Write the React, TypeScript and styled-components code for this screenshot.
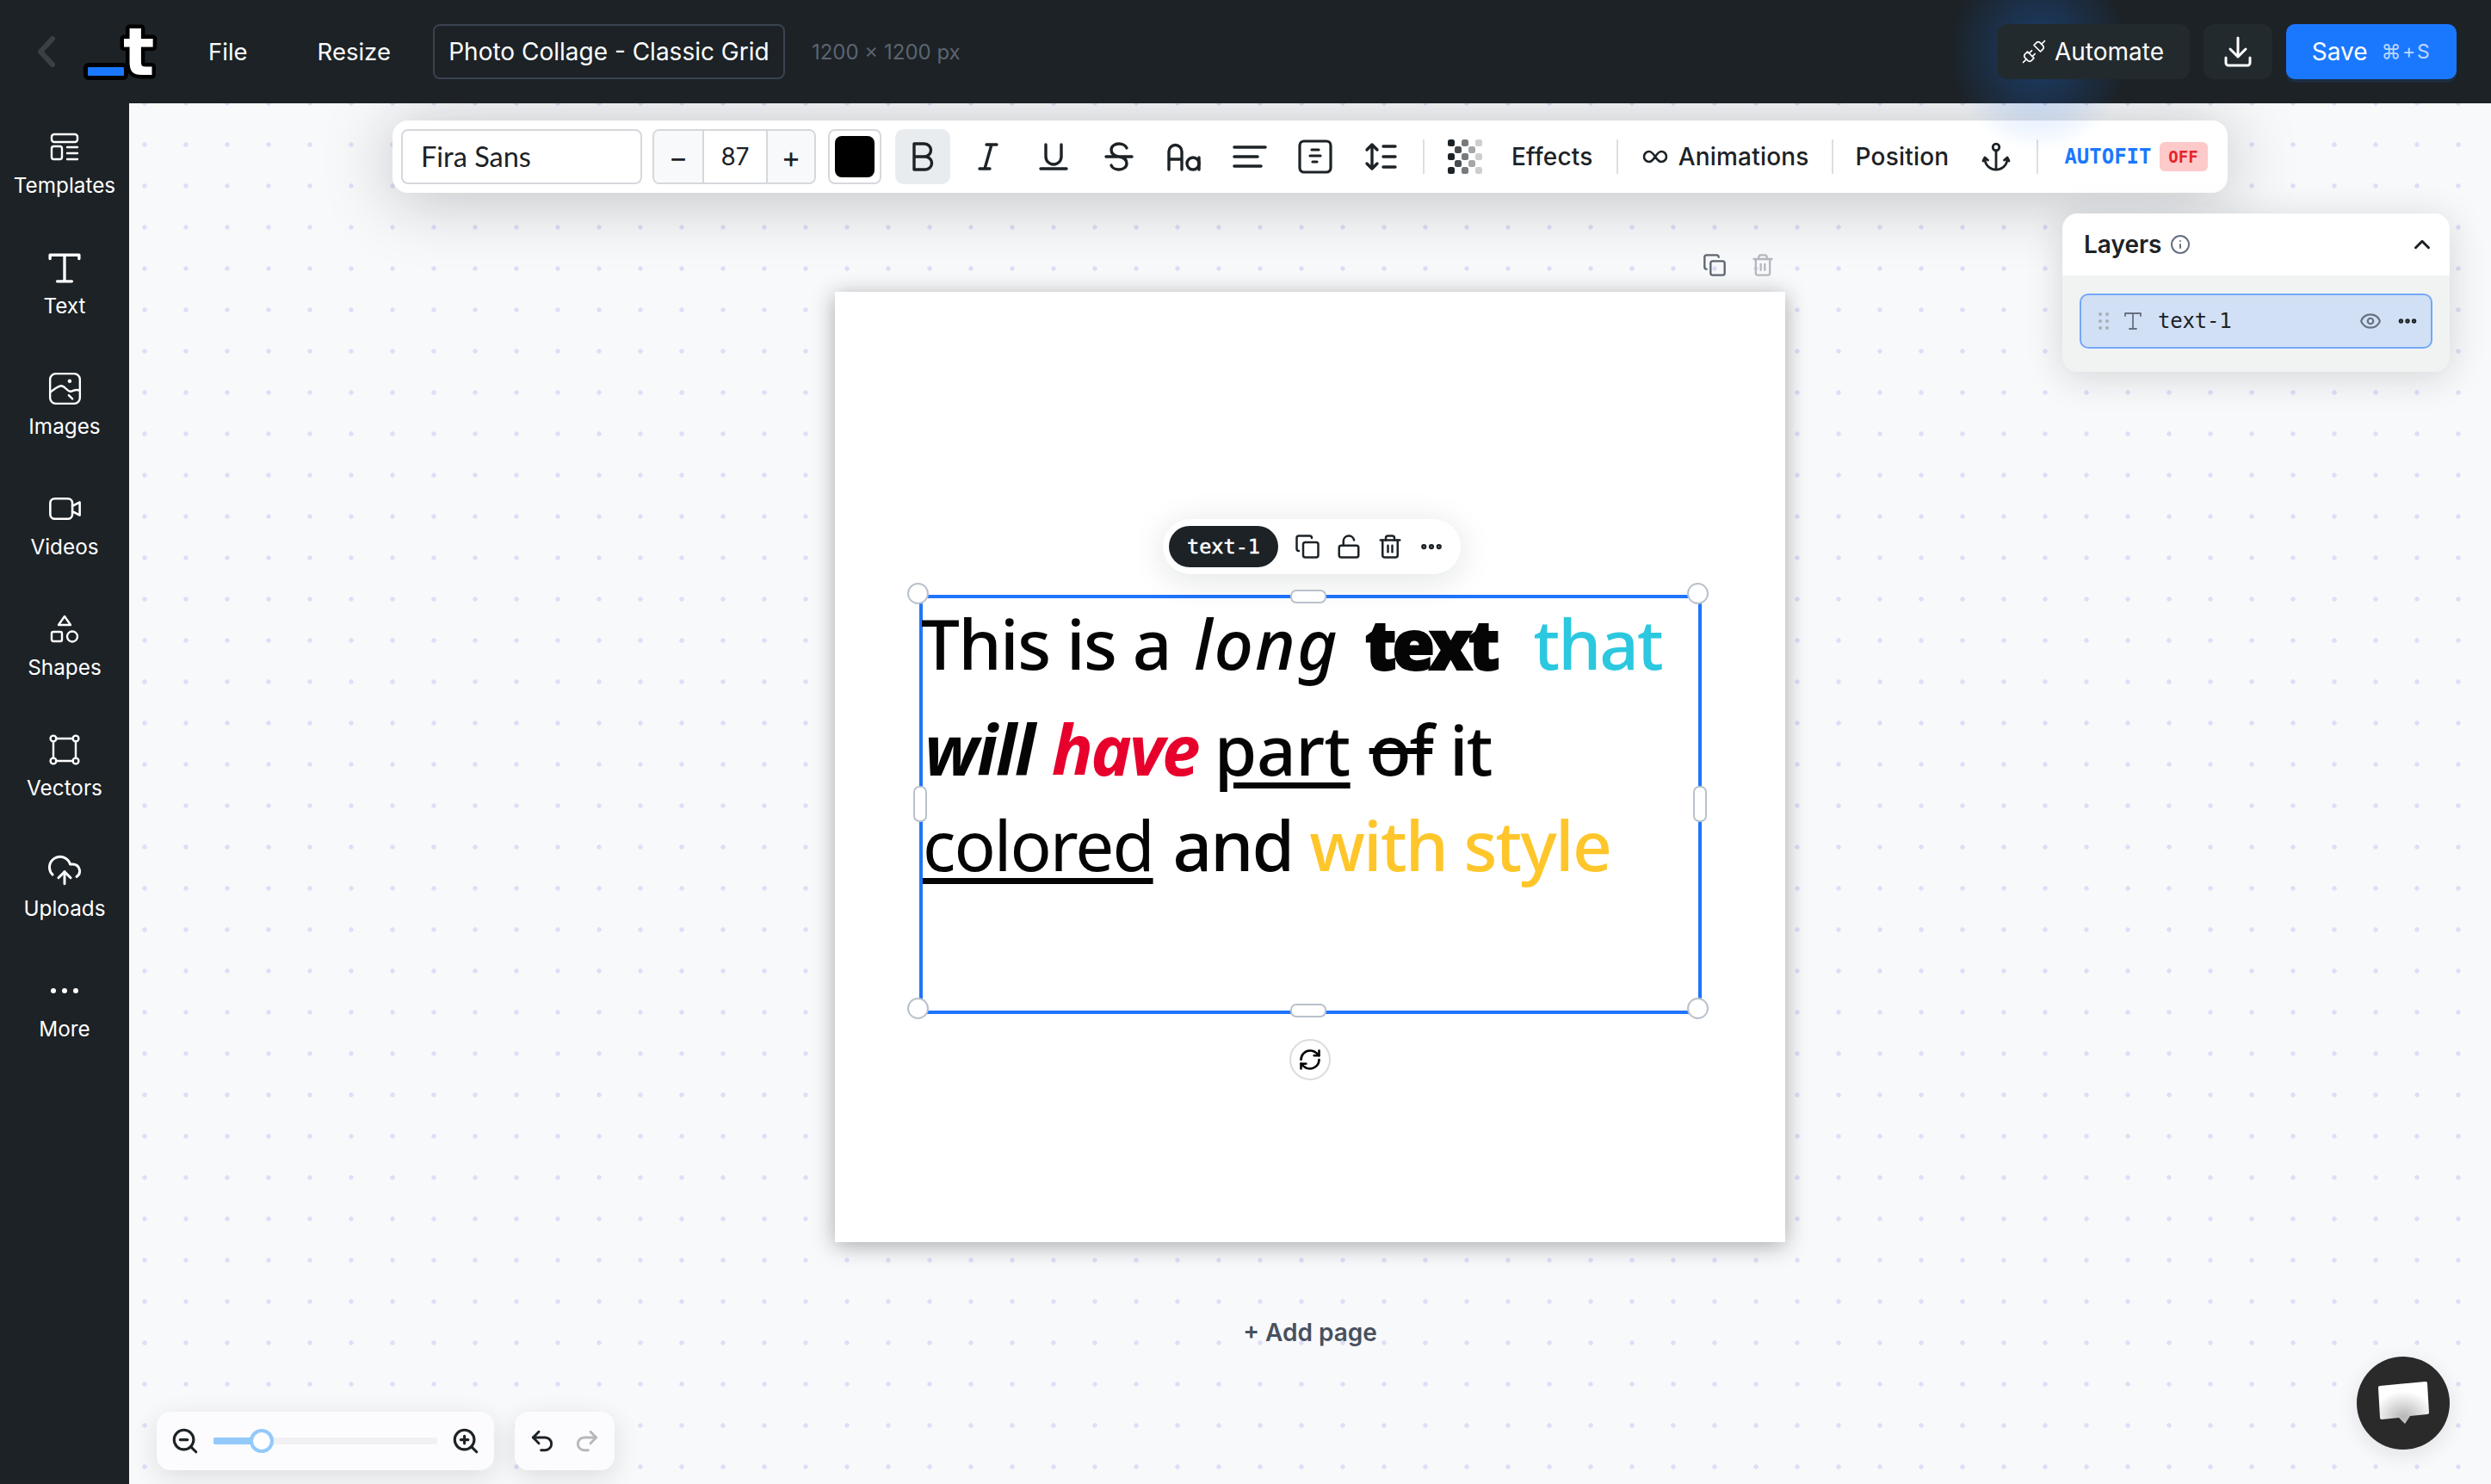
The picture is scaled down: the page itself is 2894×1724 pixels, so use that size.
import React from "react";
import styled, { createGlobalStyle } from "styled-components";
import {
  ChevronUp,
  Copy,
  Ellipsis,
  Eye,
  Info,
  LockOpen,
  Redo2,
  RefreshCw,
  Trash2,
  Undo2,
  Unplug,
  ZoomIn,
  ZoomOut,
  CloudUpload,
} from "lucide-react";

const GlobalStyle = createGlobalStyle`
  html, body {
    margin: 0;
    padding: 0;
    background: #f8f9fb;
  }
  * {
    box-sizing: border-box;
  }
`;

const DARK = "#1c2226";
const BLUE = "#1a78ff";
const UI_FONT = `Inter, "Liberation Sans", sans-serif`;
const MONO_FONT = `"DejaVu Sans Mono", "Liberation Mono", monospace`;
const DOC_FONT = `"Noto Sans", Lato, sans-serif`;

const Shell = styled.div`
  width: 2894px;
  height: 1724px;
  overflow: hidden;
  display: flex;
  flex-direction: column;
  font-family: ${UI_FONT};
  color: ${DARK};
`;

const Header = styled.header`
  position: relative;
  z-index: 3;
  height: 120px;
  flex: none;
  display: flex;
  align-items: center;
  padding: 0 40px 0 43px;
  background: ${DARK};
  color: #fff;
`;

const LogoBox = styled.div`
  margin-left: 31px;
  width: 90px;
  height: 72px;
  svg {
    overflow: visible;
  }
`;

const MenuItem = styled.span<{ $gap: number }>`
  margin-left: ${(p) => p.$gap}px;
  font-size: 27.5px;
  line-height: 34px;
`;

const TitleBox = styled.div`
  margin-left: 49px;
  width: 409px;
  height: 64px;
  display: flex;
  align-items: center;
  justify-content: center;
  border: 2px solid #3a4350;
  border-radius: 8px;
  font-size: 28px;
  white-space: nowrap;
`;

const Dimensions = styled.span`
  margin-left: 31px;
  font-size: 24px;
  color: #5c6470;
`;

const HeaderActions = styled.div`
  margin-left: auto;
  display: flex;
  align-items: center;
  gap: 16px;
`;

const AutomateButton = styled.div`
  position: relative;
  width: 224px;
  height: 64px;
  display: flex;
  align-items: center;
  justify-content: center;
  gap: 9px;
  padding-right: 2px;
  border-radius: 12px;
  background: #232a2e;
  font-size: 28px;

  &::before {
    content: "";
    position: absolute;
    z-index: -1;
    left: -56px;
    top: -84px;
    width: 210px;
    height: 232px;
    background: radial-gradient(closest-side, rgba(26, 120, 255, 0.32), rgba(26, 120, 255, 0));
    pointer-events: none;
  }
`;

const DownloadButton = styled.div`
  width: 80px;
  height: 64px;
  display: flex;
  align-items: center;
  justify-content: center;
  border-radius: 12px;
  background: #232a2e;
`;

const SaveButton = styled.div`
  width: 198px;
  height: 64px;
  display: flex;
  align-items: center;
  justify-content: center;
  gap: 16px;
  border-radius: 10px;
  background: ${BLUE};
  box-shadow: 0 4px 0 #1d2c40;
  font-size: 28px;
`;

const Shortcut = styled.span`
  font-size: 23px;
  letter-spacing: 1.6px;
  color: #bcd6ff;
`;

const Body = styled.div`
  flex: 1;
  min-height: 0;
  display: flex;
`;

const Sidebar = styled.nav`
  position: relative;
  z-index: 2;
  width: 150px;
  flex: none;
  padding-top: 18px;
  background: ${DARK};
  color: #fff;
`;

const SideItem = styled.div`
  height: 140px;
  padding-top: 13px;
  display: flex;
  flex-direction: column;
  align-items: center;
`;

const SideIcon = styled.div`
  height: 40px;
  display: flex;
  align-items: center;
  justify-content: center;
`;

const SideLabel = styled.span`
  margin-top: 9px;
  font-size: 24.3px;
  line-height: 30px;
`;

const Canvas = styled.main`
  position: relative;
  flex: 1;
  min-width: 0;
  display: flex;
  flex-direction: column;
  align-items: center;
  background-color: #f8f9fb;
  background-image: radial-gradient(circle, #dfddf7 2.4px, rgba(223, 221, 247, 0) 3px);
  background-size: 48px 48px;
  background-position: -6px -24px;
`;

const Toolbar = styled.div`
  position: relative;
  z-index: 2;
  margin-top: 20px;
  width: 2132px;
  height: 84px;
  flex: none;
  display: flex;
  align-items: center;
  padding-left: 10px;
  border-radius: 18px;
  background: #fff;
  box-shadow: 0 6px 80px rgba(20, 24, 28, 0.26);
`;

const FontSelect = styled.div`
  width: 280px;
  height: 64px;
  display: flex;
  align-items: center;
  padding: 0 0 2px 21px;
  border: 2px solid #d5d8dc;
  border-radius: 8px;
  font-family: Lato, sans-serif;
  font-size: 32.5px;
`;

const Stepper = styled.div`
  margin-left: 12px;
  width: 190px;
  height: 64px;
  display: flex;
  border: 2px solid #d5d8dc;
  border-radius: 8px;
  overflow: hidden;
`;

const StepCell = styled.div<{ $wide?: boolean }>`
  flex: ${(p) => (p.$wide ? "1" : "none")};
  width: ${(p) => (p.$wide ? "auto" : "56px")};
  display: flex;
  align-items: center;
  justify-content: center;
  font-size: ${(p) => (p.$wide ? "28px" : "34px")};
  background: ${(p) => (p.$wide ? "#fff" : "#f8f9fa")};
  & + & {
    border-left: 2px solid #d5d8dc;
  }
`;

const SwatchFrame = styled.div`
  margin-left: 14px;
  width: 62px;
  height: 64px;
  padding: 6px;
  border: 2px solid #d5d8dc;
  border-radius: 8px;
`;

const Swatch = styled.div`
  width: 100%;
  height: 100%;
  border-radius: 8px;
  background: #000;
`;

const IconGroup = styled.div`
  margin-left: 16px;
  display: flex;
  gap: 12px;
`;

const IconButton = styled.div<{ $active?: boolean }>`
  width: 64px;
  height: 64px;
  display: flex;
  align-items: center;
  justify-content: center;
  border-radius: 10px;
  background: ${(p) => (p.$active ? "#e9ecef" : "transparent")};
`;

const Divider = styled.div<{ $left: number; $right: number }>`
  width: 2px;
  height: 40px;
  flex: none;
  margin: 0 ${(p) => p.$right}px 0 ${(p) => p.$left}px;
  background: #dcdfe2;
`;

const ToolSlot = styled.div<{ $left?: number; $right?: number }>`
  display: flex;
  align-items: center;
  flex: none;
  margin: 0 ${(p) => p.$right ?? 0}px 0 ${(p) => p.$left ?? 0}px;
`;

const ToolText = styled.span<{ $left?: number }>`
  margin-left: ${(p) => p.$left ?? 0}px;
  font-size: 28px;
  font-weight: 500;
  letter-spacing: 0.2px;
  white-space: nowrap;
`;

const AutofitLabel = styled.span`
  font-family: ${MONO_FONT};
  font-size: 24px;
  font-weight: 700;
  color: ${BLUE};
`;

const OffBadge = styled.span`
  margin-left: 9px;
  width: 56px;
  height: 34px;
  display: flex;
  align-items: center;
  justify-content: center;
  border-radius: 6px;
  background: #fdc9c9;
  font-family: ${MONO_FONT};
  font-size: 19px;
  font-weight: 700;
  color: #e5252a;
`;

const Page = styled.section`
  position: relative;
  margin-top: 115px;
  width: 1104px;
  height: 1104px;
  flex: none;
  background: #fff;
  box-shadow: 0 4px 24px rgba(20, 24, 28, 0.36);
`;

const PageActions = styled.div`
  position: absolute;
  top: -45px;
  right: 0;
  display: flex;
  align-items: center;
  gap: 28px;
  padding-right: 12px;
`;

const Selection = styled.div`
  position: absolute;
  left: 98px;
  top: 352px;
  width: 909px;
  height: 487px;
  border: 4px solid #1f75fe;
`;

const TextBlock = styled.div`
  position: absolute;
  left: -2px;
  top: -16px;
  width: 900px;
  font-family: ${DOC_FONT};
  font-size: 80px;
  color: #050505;
  white-space: nowrap;
`;

const TextLine = styled.div<{ $height: number }>`
  height: ${(p) => p.$height}px;
  line-height: ${(p) => p.$height}px;
`;

const Word = styled.span<{
  $color?: string;
  $weight?: number;
  $italic?: boolean;
  $under?: boolean;
  $strike?: boolean;
  $gap?: number;
  $heavy?: boolean;
  $spacing?: number;
}>`
  display: inline-block;
  margin-left: ${(p) => p.$gap ?? 0}px;
  letter-spacing: ${(p) => p.$spacing ?? -2}px;
  color: ${(p) => p.$color ?? "inherit"};
  font-weight: ${(p) => p.$weight ?? 500};
  font-style: ${(p) => (p.$italic ? "italic" : "normal")};
  text-decoration: ${(p) => (p.$under ? "underline" : p.$strike ? "line-through" : "none")};
  text-decoration-thickness: 7px;
  text-underline-offset: 8px;
  -webkit-text-stroke: ${(p) => (p.$heavy ? "2px currentColor" : "0")};
`;

const CornerHandle = styled.div<{ $x: string; $y: string }>`
  position: absolute;
  ${(p) => p.$x};
  ${(p) => p.$y};
  width: 25px;
  height: 25px;
  border: 2px solid #b9c1cc;
  border-radius: 50%;
  background: #fff;
`;

const EdgeHandle = styled.div<{ $vertical?: boolean; $pos: string }>`
  position: absolute;
  ${(p) => p.$pos};
  width: ${(p) => (p.$vertical ? "16px" : "42px")};
  height: ${(p) => (p.$vertical ? "42px" : "16px")};
  border: 2px solid #b9c1cc;
  border-radius: 7px;
  background: #fff;
`;

const RotateHandle = styled.div`
  position: absolute;
  left: 426px;
  top: 512px;
  width: 48px;
  height: 48px;
  display: flex;
  align-items: center;
  justify-content: center;
  border: 2px solid #dcdcdc;
  border-radius: 50%;
  background: #fff;
`;

const ElementBar = styled.div`
  position: absolute;
  left: 279px;
  top: -92px;
  width: 346px;
  height: 64px;
  display: flex;
  align-items: center;
  padding-left: 7px;
  border-radius: 32px;
  background: #fff;
  box-shadow: 0 6px 40px rgba(20, 24, 28, 0.12);
`;

const ElementName = styled.span`
  width: 127px;
  height: 48px;
  display: flex;
  align-items: center;
  justify-content: center;
  border-radius: 24px;
  background: ${DARK};
  color: #fff;
  font-family: ${MONO_FONT};
  font-size: 23.5px;
  -webkit-text-stroke: 0.5px #fff;
`;

const ElementActions = styled.div`
  margin-left: 19px;
  display: flex;
  align-items: center;
  gap: 18px;
`;

const AddPage = styled.div`
  margin-top: 88px;
  font-size: 28px;
  font-weight: 600;
  line-height: 34px;
  color: #475060;
`;

const LayersPanel = styled.aside`
  position: absolute;
  z-index: 2;
  top: 128px;
  right: 48px;
  width: 450px;
  height: 184px;
  border-radius: 18px;
  overflow: hidden;
  background: #f1f3f3;
  box-shadow: 0 6px 44px rgba(20, 24, 28, 0.16);
`;

const LayersHeader = styled.div`
  height: 72px;
  display: flex;
  align-items: center;
  padding: 0 17px 0 25px;
  background: #fff;
`;

const LayersTitle = styled.span`
  margin-right: 10px;
  font-size: 28px;
  font-weight: 600;
`;

const HeaderChevron = styled.div`
  margin-left: auto;
  display: flex;
`;

const LayerRow = styled.div`
  margin: 21px 20px 0;
  height: 64px;
  display: flex;
  align-items: center;
  padding: 0 14px 0 20px;
  border: 2px solid #74a7f7;
  border-radius: 10px;
  background: #d2e0f6;
`;

const GripSlot = styled.div`
  display: flex;
  margin-right: 17px;
`;

const LayerName = styled.span`
  margin-left: 18px;
  font-family: ${MONO_FONT};
  font-size: 24px;
  letter-spacing: -0.2px;
`;

const LayerTail = styled.div`
  margin-left: auto;
  display: flex;
  align-items: center;
  gap: 17px;
`;

const FloatBar = styled.div<{ $left: number; $width: number }>`
  position: absolute;
  z-index: 2;
  left: ${(p) => p.$left}px;
  bottom: 16px;
  width: ${(p) => p.$width}px;
  height: 68px;
  display: flex;
  align-items: center;
  justify-content: space-between;
  padding: 0 16px;
  border-radius: 16px;
  background: #fcfcfe;
  box-shadow: 0 8px 30px rgba(20, 24, 28, 0.12);
`;

const ZoomTrack = styled.div`
  position: relative;
  width: 260px;
  height: 8px;
  border-radius: 2px;
  background: #f1f1f3;
`;

const ZoomFill = styled.div`
  width: 56px;
  height: 100%;
  border-radius: 2px;
  background: #93c9fb;
`;

const ZoomThumb = styled.div`
  position: absolute;
  left: 42px;
  top: -10px;
  width: 28px;
  height: 28px;
  border: 4px solid #93c9fb;
  border-radius: 50%;
  background: #fff;
`;

const ChatBubble = styled.div`
  position: absolute;
  z-index: 2;
  right: 48px;
  bottom: 40px;
  width: 108px;
  height: 108px;
  display: flex;
  align-items: center;
  justify-content: center;
  border-radius: 50%;
  background: #2a2a2a;
  box-shadow: 0 6px 24px rgba(20, 24, 28, 0.1);
`;

const ICON_STROKE = {
  fill: "none",
  stroke: "currentColor",
  strokeLinecap: "round" as const,
  strokeLinejoin: "round" as const,
};

const Logo = () => (
  <svg width="90" height="72" viewBox="0 0 90 72">
    <rect x="6" y="54" width="42" height="10" rx="1" fill={BLUE} stroke="#000" strokeWidth="10" paintOrder="stroke" />
    <text
      x="47"
      y="63"
      fontFamily="'DejaVu Sans', sans-serif"
      fontWeight="700"
      fontSize="76"
      fill="#fff"
      stroke="#000"
      strokeWidth="9"
      paintOrder="stroke"
      strokeLinejoin="round"
    >
      t
    </text>
  </svg>
);

const BackChevron = () => (
  <svg width="22" height="36" viewBox="0 0 22 36" {...ICON_STROKE} stroke="#3a4146" strokeWidth="6">
    <path d="M18 3 4 18l14 15" />
  </svg>
);

const DownloadIcon = () => (
  <svg width="34" height="36" viewBox="0 0 34 36" {...ICON_STROKE} strokeWidth="3">
    <path d="M17 2v21M8 15l9 9 9-9M3 25v6a3 3 0 0 0 3 3h22a3 3 0 0 0 3-3v-6" />
  </svg>
);

const TemplatesIcon = () => (
  <svg width="36" height="36" viewBox="0 0 36 36" {...ICON_STROKE} strokeWidth="2.4">
    <rect x="3" y="3" width="30" height="9" rx="3" />
    <rect x="3" y="17" width="12" height="15" rx="2.5" />
    <path d="M21 18h12M21 25h12M21 32h12" />
  </svg>
);

const TextIcon = () => (
  <svg width="38" height="38" viewBox="0 0 36 36" {...ICON_STROKE} strokeWidth="3.2">
    <path d="M2 8V4h32v4M18 4v29M10 33h16" />
  </svg>
);

const ImagesIcon = () => (
  <svg width="39" height="39" viewBox="0 0 36 36" {...ICON_STROKE} strokeWidth="2.2">
    <rect x="2" y="2" width="32" height="32" rx="6" />
    <path d="M2 22c5-4 9-7 12-7 4 0 6 6 10 6 3 0 4-3 10-1M22 25l4 4" />
    <circle cx="23" cy="10" r="1" fill="currentColor" />
  </svg>
);

const VideosIcon = () => (
  <svg width="39" height="30" viewBox="0 0 36 28" {...ICON_STROKE} strokeWidth="2.4">
    <rect x="2" y="3" width="24" height="22" rx="5" />
    <path d="M26 11l8-4v14l-8-4" />
  </svg>
);

const ShapesIcon = () => (
  <svg width="36" height="36" viewBox="0 0 36 36" {...ICON_STROKE} strokeWidth="2.4">
    <path d="M18 3l7 10H11z" />
    <rect x="3" y="21" width="12" height="11" rx="2" />
    <circle cx="27" cy="26.5" r="6" />
  </svg>
);

const VectorsIcon = () => (
  <svg width="36" height="36" viewBox="0 0 36 36" {...ICON_STROKE} strokeWidth="2.4">
    <path d="M8 5h20M8 31h20M5 8v20M31 8v20" />
    <circle cx="5" cy="5" r="3.4" />
    <circle cx="31" cy="5" r="3.4" />
    <circle cx="5" cy="31" r="3.4" />
    <circle cx="31" cy="31" r="3.4" />
  </svg>
);

const MoreDots = () => (
  <svg width="36" height="8" viewBox="0 0 36 8" fill="currentColor">
    <circle cx="5" cy="4" r="3" />
    <circle cx="18" cy="4" r="3" />
    <circle cx="31" cy="4" r="3" />
  </svg>
);

const BoldIcon = () => (
  <svg width="32" height="34" viewBox="0 0 32 34" {...ICON_STROKE} strokeWidth="3.4">
    <path d="M6 2v30h13a7.5 7.5 0 0 0 0-15H6M6 17h12a7.5 7.5 0 0 0 0-15H6" />
  </svg>
);

const ItalicIcon = () => (
  <svg width="32" height="34" viewBox="0 0 32 34" {...ICON_STROKE} strokeWidth="3.4">
    <path d="M14 3h12M6 31h12M20 3l-8 28" />
  </svg>
);

const UnderlineIcon = () => (
  <svg width="34" height="34" viewBox="0 0 34 34" {...ICON_STROKE} strokeWidth="3.4">
    <path d="M8 3v14a9 9 0 0 0 18 0V3M2 31h30" />
  </svg>
);

const StrikeIcon = () => (
  <svg width="34" height="34" viewBox="0 0 34 34" {...ICON_STROKE} strokeWidth="3.4">
    <path d="M26 7c-1-3-5-5-9-5-5 0-9 3-9 7 0 4 3 7 9 8 6 1 9 3 9 8 0 4-4 7-9 7-4 0-8-2-9-5M2 17h30" />
  </svg>
);

const CaseIcon = () => (
  <svg width="42" height="34" viewBox="0 0 42 34" {...ICON_STROKE} strokeWidth="3.4">
    <path d="M3 32V11a7.5 7.5 0 0 1 15 0v21M3 20h15M38 18v14" />
    <circle cx="31" cy="25" r="7" />
  </svg>
);

const AlignIcon = () => (
  <svg width="40" height="32" viewBox="0 0 40 32" {...ICON_STROKE} strokeWidth="3.6">
    <path d="M2 5h36M2 16h27M2 27h31" />
  </svg>
);

const VerticalAlignIcon = () => (
  <svg width="40" height="40" viewBox="0 0 40 40" {...ICON_STROKE} strokeWidth="3.2">
    <rect x="2" y="2" width="36" height="36" rx="5" />
    <path d="M16 12h8M14 19h12M17 26h5" />
  </svg>
);

const LineHeightIcon = () => (
  <svg width="38" height="34" viewBox="0 0 38 34" {...ICON_STROKE} strokeWidth="3.4">
    <path d="M9 3v28M3 9l6-6 6 6M3 25l6 6 6-6M22 5h14M22 17h14M22 29h14" />
  </svg>
);

const CHECKER_FADE = [1, 0.8, 0.6, 0.4, 0.22];

const CheckerIcon = () => (
  <svg width="40" height="40" viewBox="0 0 40 40" fill={DARK}>
    {[0, 1, 2, 3, 4].flatMap((row) =>
      [0, 1, 2, 3, 4]
        .filter((col) => (row + col) % 2 === 0)
        .map((col) => (
          <rect key={`${row}-${col}`} x={col * 8} y={row * 8} width="8" height="8" rx="2.5" opacity={CHECKER_FADE[col]} />
        ))
    )}
  </svg>
);

const InfinityIcon = () => (
  <svg width="30" height="16" viewBox="0 0 30 16" {...ICON_STROKE} strokeWidth="2.6">
    <path d="M15 8c-2-3-4-6-7-6a6 6 0 0 0 0 12c3 0 5-3 7-6s4-6 7-6a6 6 0 0 1 0 12c-3 0-5-3-7-6z" />
  </svg>
);

const AnchorIcon = () => (
  <svg width="34" height="34" viewBox="0 0 34 34" {...ICON_STROKE} strokeWidth="2.8">
    <circle cx="17" cy="6" r="3.8" />
    <path d="M17 10v22M4 19c0 8 6 13 13 13s13-5 13-13M2 22l2-4 3.5 3M32 22l-2-4-3.5 3" />
  </svg>
);

const GripIcon = () => (
  <svg width="12" height="20" viewBox="0 0 12 20" fill="#a7aeb8">
    {[2, 10, 18].flatMap((y) => [2, 10].map((x) => <circle key={`${x}-${y}`} cx={x} cy={y} r="2" />))}
  </svg>
);

const LayerTextIcon = () => (
  <svg width="22" height="22" viewBox="0 0 22 22" {...ICON_STROKE} stroke="#667080" strokeWidth="1.8">
    <path d="M2 5V2h18v3M11 2v18M7 20h8" />
  </svg>
);

const ChatIcon = () => (
  <svg width="66" height="56" viewBox="0 0 66 56">
    <defs>
      <radialGradient id="chat-shade" cx="50%" cy="85%" r="62%">
        <stop offset="0%" stopColor="#b5b5b5" />
        <stop offset="100%" stopColor="#ffffff" />
      </radialGradient>
    </defs>
    <path
      d="M6 8 59 3a2 2 0 0 1 2 2l2 34a2 2 0 0 1-2 2l-20 2-6 9-7-7-20 2a2 2 0 0 1-2-2L4 10a2 2 0 0 1 2-2z"
      fill="url(#chat-shade)"
    />
  </svg>
);

const SIDE_ITEMS = [
  { label: "Templates", icon: <TemplatesIcon /> },
  { label: "Text", icon: <TextIcon /> },
  { label: "Images", icon: <ImagesIcon /> },
  { label: "Videos", icon: <VideosIcon /> },
  { label: "Shapes", icon: <ShapesIcon /> },
  { label: "Vectors", icon: <VectorsIcon /> },
  { label: "Uploads", icon: <CloudUpload size={42} strokeWidth={1.7} /> },
  { label: "More", icon: <MoreDots /> },
];

const FORMAT_ICONS = [
  <BoldIcon key="b" />,
  <ItalicIcon key="i" />,
  <UnderlineIcon key="u" />,
  <StrikeIcon key="s" />,
  <CaseIcon key="case" />,
  <AlignIcon key="align" />,
  <VerticalAlignIcon key="valign" />,
  <LineHeightIcon key="lh" />,
];

const App: React.FC = () => (
  <Shell>
    <GlobalStyle />
    <Header>
      <BackChevron />
      <LogoBox>
        <Logo />
      </LogoBox>
      <MenuItem $gap={56}>File</MenuItem>
      <MenuItem $gap={81}>Resize</MenuItem>
      <TitleBox>Photo Collage - Classic Grid</TitleBox>
      <Dimensions>1200 × 1200 px</Dimensions>
      <HeaderActions>
        <AutomateButton>
          <Unplug size={30} strokeWidth={1.4} />
          Automate
        </AutomateButton>
        <DownloadButton>
          <DownloadIcon />
        </DownloadButton>
        <SaveButton>
          Save
          <Shortcut>⌘+S</Shortcut>
        </SaveButton>
      </HeaderActions>
    </Header>
    <Body>
      <Sidebar>
        {SIDE_ITEMS.map((item) => (
          <SideItem key={item.label}>
            <SideIcon>{item.icon}</SideIcon>
            <SideLabel>{item.label}</SideLabel>
          </SideItem>
        ))}
      </Sidebar>
      <Canvas>
        <Toolbar>
          <FontSelect>Fira Sans</FontSelect>
          <Stepper>
            <StepCell>−</StepCell>
            <StepCell $wide>87</StepCell>
            <StepCell>+</StepCell>
          </Stepper>
          <SwatchFrame>
            <Swatch />
          </SwatchFrame>
          <IconGroup>
            {FORMAT_ICONS.map((icon, index) => (
              <IconButton key={index} $active={index === 0}>
                {icon}
              </IconButton>
            ))}
          </IconGroup>
          <Divider $left={17} $right={27} />
          <ToolSlot $right={34}>
            <CheckerIcon />
          </ToolSlot>
          <ToolText>Effects</ToolText>
          <Divider $left={27} $right={28} />
          <InfinityIcon />
          <ToolText $left={12}>Animations</ToolText>
          <Divider $left={26} $right={26} />
          <ToolText>Position</ToolText>
          <ToolSlot $left={38}>
            <AnchorIcon />
          </ToolSlot>
          <Divider $left={30} $right={30} />
          <AutofitLabel>AUTOFIT</AutofitLabel>
          <OffBadge>OFF</OffBadge>
        </Toolbar>
        <Page>
          <PageActions>
            <Copy size={28} strokeWidth={2} color="#5d6670" />
            <Trash2 size={28} strokeWidth={2} color="#b4b9c0" />
          </PageActions>
          <Selection>
            <ElementBar>
              <ElementName>text-1</ElementName>
              <ElementActions>
                <Copy size={30} strokeWidth={2} />
                <LockOpen size={30} strokeWidth={2} />
                <Trash2 size={30} strokeWidth={2} />
                <Ellipsis size={30} strokeWidth={3} />
              </ElementActions>
            </ElementBar>
            <TextBlock>
              <TextLine $height={135}>
                <Word $spacing={-1.5}>This is a</Word>
                <Word $gap={27} $italic $spacing={2}>long</Word>
                <Word $gap={30} $weight={900} $heavy $spacing={-5}>text</Word>
                <Word $gap={44} $color="#2bc8df" $spacing={-2}>that</Word>
              </TextLine>
              <TextLine $height={111}>
                <Word $gap={4} $italic $weight={700}>will</Word>
                <Word $gap={21} $italic $weight={700} $color="#e8002d" $spacing={-2.8}>have</Word>
                <Word $gap={19} $under $spacing={-0.5}>part</Word>
                <Word $gap={22} $strike>of</Word>
                <Word $gap={20}>it</Word>
              </TextLine>
              <TextLine $height={111}>
                <Word $gap={2} $under $weight={400}>colored</Word>
                <Word $gap={23}>and</Word>
                <Word $gap={19} $color="#fec62a" $spacing={-1.7}>with style</Word>
              </TextLine>
            </TextBlock>
            <CornerHandle $x="left: -18px" $y="top: -18px" />
            <CornerHandle $x="right: -12px" $y="top: -18px" />
            <CornerHandle $x="left: -18px" $y="bottom: -10px" />
            <CornerHandle $x="right: -12px" $y="bottom: -10px" />
            <EdgeHandle $pos="left: 427px; top: -10px" />
            <EdgeHandle $pos="left: 427px; bottom: -8px" />
            <EdgeHandle $vertical $pos="left: -11px; top: 218px" />
            <EdgeHandle $vertical $pos="right: -10px; top: 218px" />
            <RotateHandle>
              <RefreshCw size={28} strokeWidth={2.2} color="#000" />
            </RotateHandle>
          </Selection>
        </Page>
        <AddPage>+ Add page</AddPage>
        <LayersPanel>
          <LayersHeader>
            <LayersTitle>Layers</LayersTitle>
            <Info size={24} strokeWidth={2} color="#667080" />
            <HeaderChevron>
              <ChevronUp size={30} strokeWidth={2.4} />
            </HeaderChevron>
          </LayersHeader>
          <LayerRow>
            <GripSlot>
              <GripIcon />
            </GripSlot>
            <LayerTextIcon />
            <LayerName>text-1</LayerName>
            <LayerTail>
              <Eye size={26} strokeWidth={2} color="#667080" />
              <Ellipsis size={26} strokeWidth={3} />
            </LayerTail>
          </LayerRow>
        </LayersPanel>
        <FloatBar $left={32} $width={392}>
          <ZoomOut size={34} strokeWidth={2.2} />
          <ZoomTrack>
            <ZoomFill />
            <ZoomThumb />
          </ZoomTrack>
          <ZoomIn size={34} strokeWidth={2.2} />
        </FloatBar>
        <FloatBar $left={448} $width={116}>
          <Undo2 size={32} strokeWidth={2.2} />
          <Redo2 size={32} strokeWidth={2.2} color="#b8b8b8" />
        </FloatBar>
        <ChatBubble>
          <ChatIcon />
        </ChatBubble>
      </Canvas>
    </Body>
  </Shell>
);

export default App;
